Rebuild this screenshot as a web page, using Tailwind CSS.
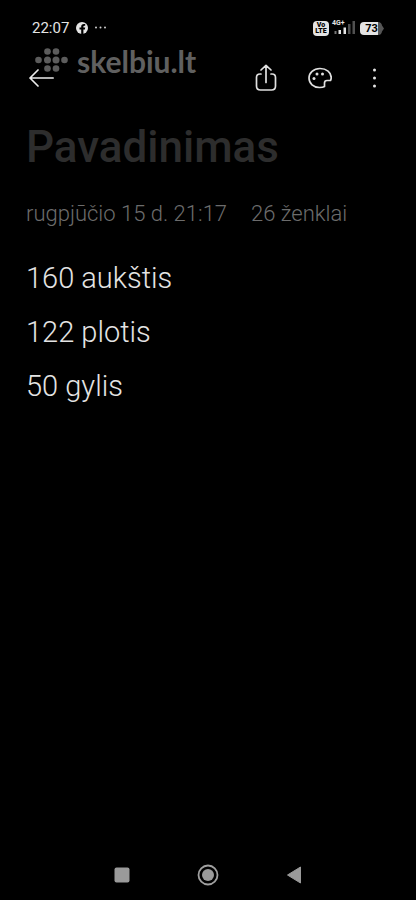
<!DOCTYPE html>
<html lang="lt">
<head>
<meta charset="utf-8">
<meta name="viewport" content="width=device-width, initial-scale=1">
<title>Pavadinimas</title>
<script src="https://cdn.jsdelivr.net/npm/@tailwindcss/browser@4"></script>
</head>
<body class="bg-black">
<div class="relative flex min-h-screen flex-col bg-black font-['Roboto',sans-serif] text-[#e4e4e4]">

  <!-- Status bar -->
  <div class="flex h-14 items-center pl-8 pr-8">
    <span class="text-[15px] leading-5">22:07</span>
    <svg class="ml-[7px] size-3" viewBox="0 0 12 12" aria-hidden="true"><circle cx="6" cy="6" r="6" fill="#e4e4e4"/><path d="M5.200 12V7.400H3.500V5.500H5.200V4.400C5.200 2.800 6.200 1.900 7.800 1.900H9.200V3.700H8.400C7.700 3.700 7.400 4 7.400 4.600V5.500H9.200L8.900 7.400H7.400V12Z" fill="#000"/></svg>
    <svg class="ml-[6px] h-3 w-3" viewBox="0 0 12 12" fill="#d0d0d0" aria-hidden="true"><circle cx="2" cy="5.500" r="1"/><circle cx="6.500" cy="5.500" r="1"/><circle cx="11" cy="5.500" r="1"/></svg>
    <div class="ml-auto flex items-center">
      <div class="flex h-[15px] w-4 flex-col items-center justify-center rounded bg-[#e4e4e4] text-[7px] leading-[6px] font-black text-black"><span>Vo</span><span>LTE</span></div>
      <div class="relative ml-[3px] h-4 w-6">
        <svg class="h-4 w-6" viewBox="0 0 24 16" aria-hidden="true"><path d="M2.500 11h2v3h-2z" fill="#777"/><path d="M6.500 10h2.500v4h-2.500zM11.500 7.500h2.500v6.500h-2.500z" fill="#e4e4e4"/><path d="M16 4h2.500v10h-2.500zM20.500 1h2.500v13h-2.500z" fill="#505050"/></svg>
        <span class="absolute left-0 top-0 text-[7px] leading-[6px] font-bold">4G+</span>
      </div>
      <div class="relative ml-1 flex h-[13px] w-6 items-center justify-center pr-px">
        <svg class="absolute inset-0 h-[13px] w-6" viewBox="0 0 24 13" aria-hidden="true"><path d="M4 0H18V13H4Q0 13 0 9V4Q0 0 4 0Z" fill="#e4e4e4"/><path d="M18 0Q21.500 0 22 3.500L24 6.500L22 9.500Q21.500 13 18 13Z" fill="#555"/></svg>
        <span class="relative text-[11px] leading-[13px] font-bold text-black">73</span>
      </div>
    </div>
  </div>

  <!-- Watermark -->
  <div class="pointer-events-none absolute left-[35px] top-[46px] flex items-start gap-[9px] text-[#606060]">
    <svg class="mt-[2px] h-6 w-[33px]" viewBox="0 0 33 24" fill="#5c5c5c" aria-hidden="true">
      <circle cx="12.500" cy="3.500" r="3.300"/><circle cx="21" cy="3.500" r="3.300"/>
      <circle cx="3.500" cy="12" r="3.300"/><circle cx="12.500" cy="12" r="3.500"/><circle cx="21" cy="12" r="3.500"/><circle cx="29.500" cy="12" r="3.300"/>
      <circle cx="12.500" cy="20.500" r="3.300"/><circle cx="21" cy="20.500" r="3.300"/>
    </svg>
    <span class="font-['Lato',sans-serif] text-[30px] leading-[30px] font-bold">skelbiu.lt</span>
  </div>

  <!-- Toolbar -->
  <header class="relative flex h-11 items-center pl-7 pr-7">
    <button type="button" aria-label="Atgal"><svg class="h-5 w-[26px]" viewBox="0 0 26 20" fill="none" stroke="#ececec" stroke-width="1.700" stroke-linecap="round" stroke-linejoin="round"><path d="M10 2L2 10L10 18M2 10H25.200"/></svg></button>
    <button type="button" class="ml-auto" aria-label="Bendrinti"><svg class="h-7 w-6" viewBox="0 0 24 28" fill="none" stroke="#e0e0e0" stroke-width="1.700" stroke-linecap="round" stroke-linejoin="round"><path d="M7 10H6Q2.500 10 2.500 13.500V22Q2.500 26 6.500 26H17.500Q21.500 26 21.500 22V13.500Q21.500 10 18 10H17M12 18.500V1.500M7 6L12 1.300L17 6"/></svg></button>
    <button type="button" class="ml-[30px]" aria-label="Tema"><svg class="h-6 w-6" viewBox="0 0 24 24" fill="none" stroke="#e0e0e0" stroke-width="1.700" stroke-linejoin="round"><path d="M12 2.500C5.500 2.500 1 7 1 12C1 17.500 5.500 21.500 11.500 21.500C13.500 21.500 15.300 21.300 16.500 20.500V17Q16.500 14.500 19 14.500H22.500C23 13.500 23.200 12.800 23.200 11.500C23.200 6.500 18.500 2.500 12 2.500Z"/><g fill="#e0e0e0" stroke="none"><circle cx="6" cy="12.500" r="1.500"/><circle cx="9" cy="8" r="1.500"/><circle cx="14.500" cy="8" r="1.500"/></g></svg></button>
    <button type="button" class="ml-10 mr-[11px]" aria-label="Daugiau"><svg class="h-5 w-[5px]" viewBox="0 0 5 20" fill="#e4e4e4"><circle cx="2.500" cy="2" r="1.500"/><circle cx="2.500" cy="10" r="1.500"/><circle cx="2.500" cy="18" r="1.500"/></svg></button>
  </header>

  <!-- Note -->
  <main class="flex flex-1 flex-col px-[26px] pt-[22px]">
    <input type="text" aria-label="Pavadinimas" placeholder="Pavadinimas" class="h-[50px] w-full bg-transparent text-[44px] leading-[50px] font-medium outline-none placeholder:text-[#2d2d2d]">
    <p class="mt-7 flex gap-6 text-[22px] leading-7 font-light text-[#6c6c6c]"><span>rugpjūčio 15 d. 21:17</span><span>26 ženklai</span></p>
    <textarea aria-label="Pastaba" rows="3" class="mt-[23px] w-full resize-none overflow-hidden bg-transparent text-[29px] leading-[54px] font-light outline-none">160 aukštis
122 plotis
50 gylis</textarea>
  </main>

  <!-- System navigation -->
  <nav class="flex h-[50px] items-center justify-center gap-[66px]">
    <button type="button" aria-label="Naujausios programos"><svg class="h-6 w-4" viewBox="0 0 16 24"><rect x="0.500" y="4.500" width="15" height="15" rx="2" fill="#9a9a9a"/></svg></button>
    <button type="button" aria-label="Pradžia"><svg class="h-6 w-6" viewBox="0 0 24 24"><circle cx="12" cy="12" r="9.500" fill="none" stroke="#a0a0a0" stroke-width="1.800"/><circle cx="12" cy="12" r="6" fill="#9a9a9a"/></svg></button>
    <button type="button" aria-label="Atgal (sistema)"><svg class="h-6 w-4" viewBox="0 0 16 24"><path d="M14.500 4V20L1.500 12Z" fill="#9a9a9a" stroke="#9a9a9a" stroke-linejoin="round"/></svg></button>
  </nav>
</div>
</body>
</html>
